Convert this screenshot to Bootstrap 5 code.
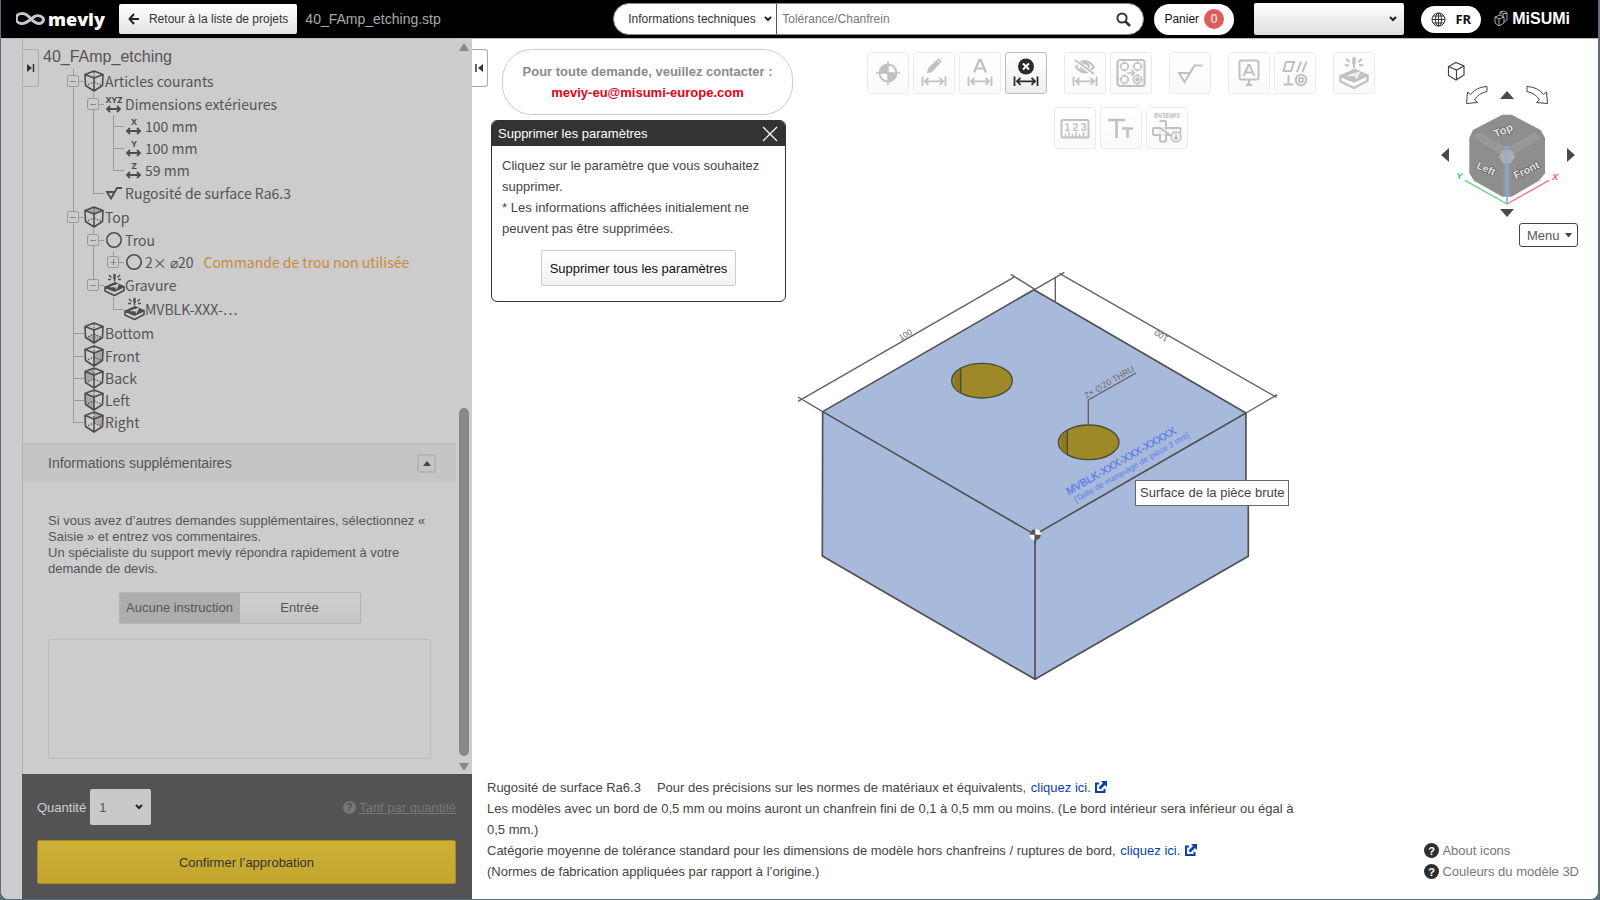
<!DOCTYPE html>
<html lang="fr">
<head>
<meta charset="utf-8">
<meta name="viewport" content="width=device-width, initial-scale=1">
<title>meviy – 40_FAmp_etching.stp</title>
<link rel="stylesheet" href="https://cdn.jsdelivr.net/npm/bootstrap@5.3.0/dist/css/bootstrap.min.css">
<style>
  :root { --ink: #333; --soft: #555; --panel: #ccc; --rule: #b4b4b4; }
  body { background: #5b7078; font: 13px/21px "Liberation Sans", Arial, sans-serif; color: #444; }
  button, select, input, textarea { font-family: inherit; }
  .app-frame { height: 100vh; padding: 0 2px 1px 1px; }
  .app-body { background: #fff; border-radius: 0 0 8px 8px; border-top: 1px solid #bbb; overflow: hidden; }
  svg { display: block; flex: none; }

  /* header */
  .top-bar { background: #000; height: 38px; padding-left: 15px; padding-right: 28px; font-size: 12px; }
  .brand-word { font: 800 18px/24px "Open Sans", sans-serif; color: #fff; margin-left: 2px; }
  .flat-grad { background: linear-gradient(#fff, #e3e3e3); color: var(--ink); border: 0; border-radius: 2px; }
  .back-link { height: 30px; padding: 0 9px; margin-left: 14px; font-size: 12px; text-decoration: none; gap: 10px; }
  .file-name { font-size: 14px; color: #aaa; }
  .search-pill { height: 32px; width: 531px; margin-right: 10px; background: #fff; border-radius: 16px; overflow: hidden; border: 1px solid #888; }
  .pick { appearance: none; border: 0; border-radius: 2px; font-size: 12px; color: var(--ink);
    background: url("data:image/svg+xml,%3Csvg xmlns='http://www.w3.org/2000/svg' width='8' height='6'%3E%3Cpath d='M1 1l3 3 3-3' fill='none' stroke='%23222' stroke-width='2'/%3E%3C/svg%3E") no-repeat right 4px center; }
  .kind { width: 163px; padding-left: 14px; border-right: 1px solid #555; border-radius: 0; }
  .query { border: 0; font-size: 12px; padding: 0 5px; background: none; }
  .query::placeholder { color: #777; opacity: 1; }
  .cart { width: 80px; height: 31px; margin-right: 20px; border: 0; background: #fff; color: #111; font-size: 12px; gap: 5px; }
  .cart-count { width: 20px; height: 20px; background: #e05c5c; color: #fff; line-height: 20px; }
  .account { width: 150px; height: 32px; margin-right: 17px; background-color: #eee; background-image: url("data:image/svg+xml,%3Csvg xmlns='http://www.w3.org/2000/svg' width='8' height='6'%3E%3Cpath d='M1 1l3 3 3-3' fill='none' stroke='%23222' stroke-width='2'/%3E%3C/svg%3E"), linear-gradient(#fff, #ddd); background-repeat: no-repeat; background-position: right 7px center, 0 0; }
  .lang { width: 60px; height: 27px; margin-right: 13px; border: 0; background: #fff; font: 700 13px/20px "Noto Sans", sans-serif; color: #111; gap: 9px; }
  .corp { font: 700 16px/24px "Liberation Sans", sans-serif; color: #fff; }

  /* side panel */
  .rail { width: 21px; background: var(--panel); }
  .side { width: 450px; background: var(--panel); color: var(--soft); border-left: 1px solid var(--rule); }
  .side-scroll { min-height: 0; position: relative; }
  .edge-tab { position: absolute; left: 0; top: 10px; width: 16px; height: 38px; padding: 0; border: 1px solid #aaa; border-left: 0; border-radius: 0 3px 3px 0; background: none; }
  .edge-main { background: #fff; }
  .tree-title { font-size: 16px; line-height: 24px; margin: 6px 0 0 20px; }
  .tree { font: 14px/22px "Noto Sans CJK SC", "Noto Sans CJK JP", sans-serif; margin-left: 44px; }
  .tree ul { padding-left: 20px; }
  .tree li { position: relative; list-style: none; }
  .tree li::before { content: ""; position: absolute; left: 6px; top: 0; bottom: 0; border-left: 1px solid #999; }
  .tree li:last-child::before { bottom: auto; height: 12px; }
  .node { display: flex; align-items: center; height: 22px; position: relative; }
  .node.tall { height: 24px; }
  .node::before { content: ""; position: absolute; left: 6px; width: 11px; border-top: 1px solid #999; }
  .node svg { margin-right: 1px; overflow: visible; }
  .fold { width: 12px; height: 12px; padding: 0; margin-right: 5px; border: 1px solid #999; border-radius: 2px; position: relative; z-index: 1;
    background: linear-gradient(#888, #888) center / 6px 1px no-repeat var(--panel); }
  .fold.closed { background: linear-gradient(#888, #888) center / 6px 1px no-repeat, linear-gradient(#888, #888) center / 1px 6px no-repeat var(--panel); }
  .leaf { width: 12px; margin-right: 5px; }
  .warn { color: #c98a3e; margin-left: 10px; }
  .extra-head { border-top: 2px solid #bbb; background: #c5c5c5; height: 39px; padding: 0 20px 0 25px; margin-top: 10px; }
  .extra-title { font-size: 14px; }
  .mini { width: 19px; height: 19px; padding: 0; border: 2px solid #b4b4b4; border-radius: 3px; background: none; }
  .extra-body { padding: 31px 25px 15px; line-height: 16px; }
  .choice { width: 242px; height: 32px; margin: 15px auto 15px; border: 1px solid var(--rule); border-radius: 2px; overflow: hidden; }
  .choice label { flex: 1; line-height: 30px; text-align: center; background: linear-gradient(#cfcfcf, #c6c6c6); }
  .choice input:checked + label { background: #adadad; }
  .note-box { height: 120px; width: 383px; border: 1px solid #bbb; border-radius: 3px; background: none; resize: none; }
  .track { width: 16px; padding: 5px 0 4px; background: #cdcdcd; }
  .thumb { width: 10px; height: 348px; border-radius: 5px; background: #888; margin: auto 0 7px; }
  .order { background: #535353; padding: 15px 16px 15px 15px; height: 125px; margin-left: -1px; }
  .qty-label { color: #d0d0d0; }
  .qty { width: 61px; height: 36px; padding-left: 9px; font-size: 13px; color: #555; background-color: #c9c9c9; background-position: right 8px center; }
  .tariff { color: #777; }
  .confirm { height: 44px; border: 1px solid #a58c28; border-radius: 2px; background: linear-gradient(#ccb035, #c4a62f); color: #333; font-size: 13px; }

  /* 3D view */
  .overlay { position: relative; }
  .left-col { width: 329px; padding-left: 19px; padding-top: 10px; }
  .contact { width: 291px; height: 66px; margin-left: 11px; border: 1px solid #ccc; border-radius: 30px; background: #fff; color: #8a8a8a; font-weight: 700; }
  .contact a { color: #e60012; text-decoration: none; }
  .tool-panel { width: 295px; margin-top: 5px; border: 1px solid var(--ink); border-radius: 6px; background: #fff; overflow: hidden; }
  .tool-head { background: var(--ink); color: #fff; height: 25px; padding: 0 7px 0 6px; }
  .tool-text { padding: 9px 10px 15px; }
  .plain { height: 36px; width: 195px; margin-top: 11px; border: 1px solid #ccc; border-radius: 2px; background: linear-gradient(#fff, #f2f2f2); color: #111; font-size: 13px; }
  .tools { padding-top: 13px; gap: 13px; }
  .tools-row { gap: 17px; }
  .tools-set { gap: 4px; }
  .tool { width: 42px; height: 42px; padding: 0; border: 1px solid #ebebeb; border-radius: 3px; background: linear-gradient(#fff, #fafafa); color: #c1c1c1; }
  .tool.active { border-color: #bbb; background: linear-gradient(#fff, #eee); color: #2b2b2b; }
  .nav-col { width: 157px; padding: 22px 20px 0 0; }
  .nav-line { margin-right: 3px; }
  .nav-mid { margin-right: 6px; gap: 12px; }
  .bare { border: 0; padding: 0; background: none; color: #4a4a4a; }
  .menu-btn { width: 59px; height: 24px; border: 1px solid #444; border-radius: 3px; background: #fff; color: #555; padding: 0 5px 0 7px; margin-top: 6px; font-size: 13px; }
  .notes { width: 824px; padding: 0 0 17px 15px; color: #444; }
  .notes a { color: #0a3fa8; text-decoration: none; margin-left: 1px; }
  .notes svg, .tariff svg { display: inline-block; vertical-align: -2px; }
  .help { padding: 0 19px 17px 0; }
  .help a { color: #777; text-decoration: none; gap: 3px; }
</style>
</head>
<body>
<svg width="0" height="0" class="position-absolute" aria-hidden="true">
  <defs>
    <g id="box" fill="none" stroke="#4d4d4d" stroke-linejoin="round">
      <path stroke-width="1.6" d="M10 1 19 4.500 18.500 15.500 10 21 1.500 15.500 1 4.500ZM1 4.500 10 8 19 4.500M10 8V21"/>
      <path stroke-width="1.200" stroke-dasharray="1.500 1.500" d="M10 2V12L2 15.500M10 12 18 15.500"/>
    </g>
    <g id="span"><path d="M3 6H16M6 3 3 6 6 9M13 3 16 6 13 9" fill="none" stroke="#4d4d4d" stroke-width="1.800"/></g>
    <g id="ring"><circle cx="10" cy="10" r="7.200" fill="none" stroke="#4d4d4d" stroke-width="1.600"/></g>
    <g id="engrave">
      <path d="M1 13 11 8.500 20 12.500 10.500 17Z" fill="currentColor" stroke="currentColor" stroke-linejoin="round"/>
      <path d="M1 13V17L10.500 21.500 20 16.500V12.500L10.500 17Z" fill="none" stroke="currentColor" stroke-width="1.600" stroke-linejoin="round"/>
      <path d="M6.500 13 14 10.800 12 15M9 12.300 12.300 13.200" fill="none" stroke="#fff" stroke-opacity=".8" stroke-width="1.200"/>
      <path d="M10.500 0V5" stroke="currentColor" stroke-width="2.400"/><path d="M10.500 5V7.500" stroke="currentColor" stroke-width="1.400"/>
      <path d="M5 1 7.500 3.500M4 5.500H7M16 1 13.500 3.500M17 5.500H14" stroke="currentColor" stroke-width="1.400"/>
    </g>
    <g id="dim" fill="none" stroke="currentColor" stroke-width="1.800"><path d="M8.500 23.500V33M31.500 23.500V33M11 28.300H29M14.500 24.800 11 28.300 14.500 31.800M25.500 24.800 29 28.300 25.500 31.800"/></g>
    <g id="ext"><path d="M5 2.500H2V11H10.500V8" fill="none" stroke="#0a3fa8" stroke-width="2"/><path d="M7 0H13V6L11 4 6.500 8.500 4.500 6.500 9 2Z" fill="#0a3fa8"/></g>
    <g id="ask"><circle cx="7.500" cy="7.500" r="7.500" fill="currentColor"/></g>
  </defs>
</svg>

<div class="app-frame d-flex flex-column">
  <header class="top-bar d-flex align-items-center flex-shrink-0">
    <svg width="30" height="16" viewBox="0 0 30 16"><path d="M15 8C11 3 8 2 5.500 2.500A5 5 0 0 0 5 12.500C9 13.500 14 9 17 6.500S24 4 26.500 6.500 26 13 22.500 12.500C19 12 17 10 15 8Z" fill="none" stroke="#c9c5cc" stroke-width="3"/></svg>
    <span class="brand-word">meviy</span>
    <a href="#" class="back-link flat-grad d-flex align-items-center"><svg width="11" height="12" viewBox="0 0 11 12"><path d="M11 6H2M6 1 1.500 6 6 11" fill="none" stroke="#222" stroke-width="2"/></svg>Retour à la liste de projets</a>
    <span class="file-name ms-2">40_FAmp_etching.stp</span>
    <form class="search-pill d-flex ms-auto">
      <select class="pick kind" aria-label="Catégorie"><option>Informations techniques</option></select>
      <input class="query flex-grow-1" type="text" placeholder="Tolérance/Chanfrein" aria-label="Recherche">
      <button type="button" class="bare me-2 pe-1" aria-label="Rechercher"><svg width="15" height="15" viewBox="0 0 15 15"><circle cx="6" cy="6" r="4.600" fill="none" stroke="#333" stroke-width="2"/><path d="M9.500 9.500 14 14" stroke="#333" stroke-width="2.600"/></svg></button>
    </form>
    <button type="button" class="cart rounded-pill d-flex align-items-center justify-content-center">Panier<span class="cart-count rounded-circle">0</span></button>
    <select class="pick account" aria-label="Compte"><option></option></select>
    <button type="button" class="lang rounded-pill d-flex align-items-center justify-content-center p-0"><svg width="15" height="15" viewBox="0 0 15 15" fill="none" stroke="#333"><circle cx="7.500" cy="7.500" r="6.500"/><ellipse cx="7.500" cy="7.500" rx="3" ry="6.500"/><path d="M7.500 1V14M1 7.500H14M2 4H13M2 11H13"/></svg>FR</button>
    <a href="#" class="corp text-decoration-none d-flex align-items-center gap-1"><svg width="14" height="18" viewBox="0 0 14 18" fill="none" stroke="#aaa"><path d="M1 7 5 9V16L1 13ZM5 9 10 7V13L5 16M1 7 6 5 6 2 10 1 13 3V10L10 12M6 2 9 4 13 3M9 4V7M6 5 10 7"/></svg>MiSUMi</a>
  </header>

  <div class="app-body d-flex flex-grow-1 overflow-hidden">
    <div class="rail flex-shrink-0"></div>
    <aside class="side d-flex flex-column flex-shrink-0">
      <div class="side-scroll d-flex flex-grow-1">
        <div class="flex-grow-1">
          <button type="button" class="edge-tab" aria-label="Déplier"><svg width="14" height="12" viewBox="0 0 14 12"><path d="M4 2 9 6 4 10Z" fill="#333"/><path d="M10.500 2V10" stroke="#333" stroke-width="1.500"/></svg></button>
          <div class="tree-title">40_FAmp_etching</div>
          <ul class="tree p-0 mb-0" id="tree"></ul>
          <div class="extra-head d-flex align-items-center justify-content-between">
            <span class="extra-title">Informations supplémentaires</span>
            <button type="button" class="mini" aria-label="Replier"><svg class="mx-auto" width="8" height="5" viewBox="0 0 8 5"><path d="M0 5 4 0 8 5Z" fill="#444"/></svg></button>
          </div>
          <div class="extra-body">
            Si vous avez d’autres demandes supplémentaires, sélectionnez «<br>Saisie » et entrez vos commentaires.<br>Un spécialiste du support meviy répondra rapidement à votre<br>demande de devis.
            <div class="choice d-flex">
              <input class="visually-hidden" type="radio" name="instr" id="i0" checked><label for="i0">Aucune instruction</label>
              <input class="visually-hidden" type="radio" name="instr" id="i1"><label for="i1">Entrée</label>
            </div>
            <textarea class="note-box d-block" aria-label="Commentaires"></textarea>
          </div>
        </div>
        <div class="track d-flex flex-column align-items-center">
          <svg width="10" height="7" viewBox="0 0 10 7"><path d="M0 7 3.500 1Q5-1 6.500 1L10 7Z" fill="#888"/></svg>
          <div class="thumb"></div>
          <svg width="10" height="7" viewBox="0 0 10 7"><path d="M0 0H10L6.500 6Q5 8 3.500 6Z" fill="#888"/></svg>
        </div>
      </div>
      <div class="order flex-shrink-0 d-flex flex-column justify-content-between">
        <div class="d-flex align-items-center">
          <label for="qty" class="qty-label me-1">Quantité</label>
          <select id="qty" class="pick qty"><option>1</option></select>
          <span class="tariff ms-auto"><svg width="13" height="13" viewBox="0 0 15 15"><use href="#ask"/><text x="7.500" y="12" text-anchor="middle" font-size="12" font-weight="700" fill="#535353">?</text></svg> <a href="#" class="tariff">Tarif par quantité</a></span>
        </div>
        <button type="button" class="confirm w-100">Confirmer l’approbation</button>
      </div>
    </aside>

    <main class="flex-grow-1 position-relative bg-white">
      <svg class="position-absolute w-100 h-100" viewBox="0 0 1126 860" role="img" aria-label="Modèle 3D">
        <g transform="translate(308 221) scale(.3333)" stroke-linejoin="round" font-family="Liberation Sans, sans-serif">
          <path d="M762 89 1398 459V664H1405V889L765 1258 127 888 128 455Z" fill="#a8badc" stroke="#505050" stroke-width="5"/>
          <path d="M128 455 765 824 1398 459M765 824V1258" fill="none" stroke="#505050" stroke-width="5"/>
          <path d="M54 411 128 455M54 424 705 50M692 43 765 88 853 37M838 40 1490 412M1398 459 1492 404M826 50V128M925 492V420L1068 339" fill="none" stroke="#606060" stroke-width="4"/>
          <g stroke="#4a4a3a" stroke-width="4"><ellipse cx="606" cy="362" rx="91" ry="52" fill="#9d8928"/><ellipse cx="926" cy="547" rx="91" ry="52" fill="#9d8928"/><path d="M524 340 542 328V398L524 385ZM844 525 862 512V584L844 570Z" fill="#8b7a22" stroke="none"/><path d="M542 326V399M862 511V584"/></g>
          <g fill="#6a6a6a"><text transform="translate(362 242) rotate(-30)" font-size="25">100</text><text transform="translate(1166 230) rotate(210)" font-size="25">100</text><text transform="translate(919 416) rotate(-30)" font-size="26">2× ∅20 THRU</text></g>
          <g fill="#5c7ee6"><text transform="translate(866 706) rotate(-30)" font-size="32" stroke="#5c7ee6">MVBLK-XXX-XXX-XXXXX</text><text transform="translate(888 728) rotate(-30)" font-size="25">[Taille de marquage de pièce 3 mm]</text></g>
          <circle cx="766" cy="824" r="17" fill="#fff"/><path d="M766 824V807A17 17 0 0 1 783 824ZM766 824V841A17 17 0 0 1 749 824Z" fill="#555" transform="rotate(90 766 824)"/><path d="M766 824V850" stroke="#505050" stroke-width="5"/>
        </g>
        <rect x="663.500" y="441.500" width="153" height="25" fill="#fff" stroke="#666"/>
        <text x="668" y="458" font-size="13" fill="#444">Surface de la pièce brute</text>
      </svg>

      <div class="overlay d-flex flex-column justify-content-between h-100">
        <div class="d-flex align-items-start">
          <button type="button" class="edge-tab edge-main" aria-label="Replier le panneau"><svg width="14" height="12" viewBox="0 0 14 12"><path d="M11 2 6 6 11 10Z" fill="#333"/><path d="M4 2V10" stroke="#333" stroke-width="1.500"/></svg></button>
          <div class="left-col flex-shrink-0">
            <div class="contact d-flex flex-column align-items-center justify-content-center">Pour toute demande, veuillez contacter :<a href="mailto:meviy-eu@misumi-europe.com">meviy-eu@misumi-europe.com</a></div>
            <section class="tool-panel">
              <div class="tool-head d-flex align-items-center justify-content-between">Supprimer les paramètres<button type="button" class="bare" aria-label="Fermer"><svg width="16" height="16" viewBox="0 0 16 16"><path d="M1 1 15 15M15 1 1 15" stroke="#fff" stroke-width="1.300"/></svg></button></div>
              <div class="tool-text">Cliquez sur le paramètre que vous souhaitez supprimer.<br>* Les informations affichées initialement ne peuvent pas être supprimées.
                <button type="button" class="plain d-block mx-auto p-0">Supprimer tous les paramètres</button></div>
            </section>
          </div>

          <div class="tools flex-grow-1 d-flex flex-column align-items-center">
            <div class="tools-row d-flex">
              <div class="tools-set d-flex">
                <button type="button" class="tool" aria-label="Origine"><svg width="40" height="40" viewBox="0 0 40 40"><circle cx="20" cy="20" r="8.500" fill="none" stroke="currentColor" stroke-width="1.800"/><path d="M20 20V11.500A8.500 8.500 0 0 0 11.500 20ZM20 20V28.500A8.500 8.500 0 0 0 28.500 20Z" fill="currentColor"/><path d="M20 8V32M8 20H32" stroke="currentColor" stroke-width="1.500"/></svg></button>
                <button type="button" class="tool" aria-label="Modifier"><svg width="40" height="40" viewBox="0 0 40 40"><path d="M13.500 20 14.500 15.500 22.500 7.500 25.500 10.500 18 18.500ZM23.500 6.500 25 6 27 8 26.500 9.500Z" fill="currentColor" stroke="currentColor"/><use href="#dim"/></svg></button>
                <button type="button" class="tool" aria-label="Texte de cote"><svg width="40" height="40" viewBox="0 0 40 40"><path d="M14 19.500 19.300 7H20.700L26 19.500M16 15.500H24" fill="none" stroke="currentColor" stroke-width="2.200"/><use href="#dim"/></svg></button>
                <button type="button" class="tool active" aria-label="Supprimer"><svg width="40" height="40" viewBox="0 0 40 40"><circle cx="20" cy="13.500" r="8" fill="currentColor"/><path d="M17 10.500 23 16.500M23 10.500 17 16.500" stroke="#fff" stroke-width="2"/><use href="#dim"/></svg></button>
              </div>
              <div class="tools-set d-flex">
                <button type="button" class="tool" aria-label="Masquer"><svg width="40" height="40" viewBox="0 0 40 40"><path d="M11 14Q20 2 29 14 20 25 11 14Z" fill="none" stroke="currentColor" stroke-width="2"/><circle cx="20" cy="14" r="3.800" fill="none" stroke="currentColor" stroke-width="2.500"/><path d="M10.500 8 28.500 21" stroke="#fff" stroke-width="4"/><path d="M10 7 29 21" stroke="currentColor" stroke-width="1.800"/><use href="#dim"/></svg></button>
                <button type="button" class="tool" aria-label="Grouper les trous"><svg width="40" height="40" viewBox="0 0 40 40" fill="none" stroke="currentColor" stroke-width="1.600"><rect x="6.500" y="7" width="27" height="26" rx="2.500" stroke-width="2.200"/><circle cx="13.500" cy="13.500" r="3.700"/><circle cx="26.500" cy="13.500" r="3.700"/><circle cx="13.500" cy="26.500" r="3.700"/><circle cx="26.500" cy="26.500" r="4"/><circle cx="26.500" cy="26.500" r="1.500" fill="currentColor"/><path d="M13.500 8.500V10.500M13.500 16.500V18.500M26.500 8.500V10.500M26.500 16.500V18.500M13.500 21.500V23.500M13.500 29.500V31.500M26.500 21V23M26.500 30V32M8.500 13.500H10.500M16.500 13.500H18.500M21.500 13.500H23.500M29.500 13.500H31.500M8.500 26.500H10.500M29.500 26.500H31.500M16 20H23M20.500 17 23.500 20 20.500 23"/></svg></button>
              </div>
              <div class="tools-set d-flex"><button type="button" class="tool" aria-label="Rugosité"><svg width="40" height="40" viewBox="0 0 40 40"><path d="M20 20H9L14.500 29 24.500 12.500H32.500" fill="none" stroke="currentColor" stroke-width="2"/></svg></button></div>
              <div class="tools-set d-flex">
                <button type="button" class="tool" aria-label="Référence"><svg width="40" height="40" viewBox="0 0 40 40" fill="none" stroke="currentColor" stroke-width="2"><rect x="10.500" y="7.500" width="19" height="19" rx="2"/><path d="M14.500 23 19.500 12H20.500L25.500 23M16.500 19.500H23.500M20 27V30"/><path d="M16 33 20 28.500 24 33Z" fill="currentColor" stroke="none"/></svg></button>
                <button type="button" class="tool" aria-label="Tolérances géométriques"><svg width="40" height="40" viewBox="0 0 40 40" fill="none" stroke="currentColor" stroke-width="2"><path d="M11 9H19L16 18H8.500ZM22 19 26 8.500M27.500 19 31.500 8.500M13.500 22V31.500M8.500 31.500H18.500"/><circle cx="26" cy="27" r="5.300"/><circle cx="26" cy="27" r="2.200"/></svg></button>
              </div>
              <div class="tools-set d-flex"><button type="button" class="tool" aria-label="Gravure"><svg width="40" height="40" viewBox="-3.500 -2 28 28"><use href="#engrave" transform="translate(0 1)"/></svg></button></div>
            </div>
            <div class="tools-set d-flex">
              <button type="button" class="tool" aria-label="Mesure"><svg width="40" height="40" viewBox="0 0 40 40"><rect x="6.500" y="12" width="27" height="17.500" rx="1.500" fill="none" stroke="currentColor" stroke-width="2"/><path d="M10.500 29V26M14 29V24M17.500 29V26M21 29V24M24.500 29V26M28.500 29V24" stroke="currentColor" stroke-width="1.400"/><text x="20.500" y="23" text-anchor="middle" font-size="10" font-weight="700" fill="currentColor">1 2 3</text></svg></button>
              <button type="button" class="tool" aria-label="Taille du texte"><svg width="40" height="40" viewBox="0 0 40 40"><path d="M7 12H24M15.500 12V30" stroke="currentColor" stroke-width="2.600"/><path d="M21 20.500H32M26.500 20.500V30" stroke="currentColor" stroke-width="2.600"/></svg></button>
              <button type="button" class="tool" aria-label="6 vues"><svg width="40" height="40" viewBox="0 0 40 40"><text x="20" y="10" text-anchor="middle" font-size="7" font-weight="700" font-family="Noto Sans, sans-serif" fill="currentColor">6VIEWS</text><path d="M13 14Q13 13 14 13H18Q19 13 19 14V20H32.500Q33.500 20 33.500 21V25M23 27H19V32.500Q19 33.500 18 33.500H14Q13 33.500 13 32.500V27H7Q6 27 6 26V21Q6 20 7 20H13Z" fill="none" stroke="currentColor" stroke-width="2"/><path d="M13 20H19V27H13ZM26 20V24" fill="none" stroke="currentColor" stroke-opacity=".6"/><circle cx="29" cy="29" r="4.800" fill="#fff" stroke="currentColor" stroke-width="1.800"/><path d="M29 26V31M26.800 29 29 31.500 31.200 29" fill="none" stroke="currentColor" stroke-width="1.800"/></svg></button>
            </div>
          </div>

          <div class="nav-col flex-shrink-0 d-flex flex-column">
            <button type="button" class="bare ms-1 me-auto" aria-label="Vue isométrique"><svg width="20" height="20" viewBox="0 0 20 20"><path d="M11 1.500 19 5V14L11 19 3.500 14.500V5.500ZM3.500 5.500 11.500 9 19 5M11.500 9V19" fill="none" stroke="#444" stroke-width="1.200"/></svg></button>
            <div class="nav-mid d-flex justify-content-center align-items-center mt-1">
              <button type="button" class="bare" aria-label="Pivoter à gauche"><svg width="23" height="19" viewBox="0 0 23 19"><path d="M22 1.500V6.500Q13 8.500 9.500 15L12.500 17.500 1.500 18.500 2.500 7 5.500 9.500Q11 2 22 1.500Z" fill="#fff" stroke="#444"/></svg></button>
              <button type="button" class="bare" aria-label="Haut"><svg width="14" height="8" viewBox="0 0 14 8"><path d="M0 8 7 0 14 8Z" fill="currentColor"/></svg></button>
              <button type="button" class="bare" aria-label="Pivoter à droite"><svg width="23" height="19" viewBox="0 0 23 19"><path d="M1 1.500V6.500Q10 8.500 13.500 15L10.500 17.500 21.500 18.500 20.500 7 17.500 9.500Q12 2 1 1.500Z" fill="#fff" stroke="#444"/></svg></button>
            </div>
            <div class="nav-line d-flex justify-content-between align-items-center">
              <button type="button" class="bare" aria-label="Gauche"><svg width="8" height="14" viewBox="0 0 8 14"><path d="M8 0 0 7 8 14Z" fill="currentColor"/></svg></button>
              <svg width="104" height="101" viewBox="171 162 312 303" font-family="Liberation Sans, sans-serif">
                <path d="M310 194H338L425 240 438 263V370L420 392 338 440H310L225 392 211 370V263L222 240Z" fill="#8e8e8e"/>
                <path d="M240 247 324 293 408 247 425 265 345 312H303L222 263Z" fill="#989898"/>
                <path d="M313 335H335V438H313Z" fill="#979797"/>
                <path d="M312 300H336L349 320 336 340H312L299 320Z" fill="#adadad"/>
                <g fill="#e4e4e4" stroke="#5c5c5c" stroke-width="4" paint-order="stroke" font-weight="700"><text transform="translate(290 264) rotate(-24)" font-size="34">Top</text><text transform="translate(231 354) rotate(24)" font-size="31">Left</text><text transform="translate(350 388) rotate(-26)" font-size="32">Front</text></g>
                <path d="M324 462 198 391" stroke="#5fd67c" stroke-width="4"/><path d="M324 462 450 391" stroke="#f87474" stroke-width="4"/><path d="M324 462V318" stroke="#74b2f4" stroke-width="5"/>
                <g font-size="28" font-weight="700" font-style="italic"><text x="172" y="388" fill="#3ccc62">Y</text><text x="459" y="390" fill="#f45c5c">X</text><text x="316" y="307" fill="#74b2f4">Z</text></g>
              </svg>
              <button type="button" class="bare" aria-label="Droite"><svg width="8" height="14" viewBox="0 0 8 14"><path d="M0 0 8 7 0 14Z" fill="currentColor"/></svg></button>
            </div>
            <button type="button" class="bare nav-mid pt-1 d-flex justify-content-center" aria-label="Bas"><svg width="14" height="8" viewBox="0 0 14 8"><path d="M0 0H14L7 8Z" fill="currentColor"/></svg></button>
            <button type="button" class="menu-btn ms-auto d-flex align-items-center justify-content-between">Menu<svg width="7" height="5" viewBox="0 0 7 5"><path d="M0 0H7L3.500 4.500Z" fill="#444"/></svg></button>
          </div>
        </div>

        <div class="d-flex align-items-end justify-content-between">
          <div class="notes">
            Rugosité de surface Ra6.3<span class="ms-3">Pour des précisions sur les normes de matériaux et équivalents,</span> <a href="#">cliquez ici. <svg width="14" height="13" viewBox="0 0 14 13"><use href="#ext"/></svg></a><br>
            Les modèles avec un bord de 0,5 mm ou moins auront un chanfrein fini de 0,1 à 0,5 mm ou moins. (Le bord intérieur sera inférieur ou égal à 0,5 mm.)<br>
            Catégorie moyenne de tolérance standard pour les dimensions de modèle hors chanfreins / ruptures de bord, <a href="#">cliquez ici. <svg width="14" height="13" viewBox="0 0 14 13"><use href="#ext"/></svg></a><br>
            (Normes de fabrication appliquées par rapport à l’origine.)
          </div>
          <div class="help">
            <a href="#" class="d-flex align-items-center"><svg width="15" height="15" viewBox="0 0 15 15" color="#2e2e2e"><use href="#ask"/><text x="7.500" y="11.500" text-anchor="middle" font-size="11" font-weight="700" fill="#fff">?</text></svg>About icons</a>
            <a href="#" class="d-flex align-items-center"><svg width="15" height="15" viewBox="0 0 15 15" color="#2e2e2e"><use href="#ask"/><text x="7.500" y="11.500" text-anchor="middle" font-size="11" font-weight="700" fill="#fff">?</text></svg>Couleurs du modèle 3D</a>
          </div>
        </div>
      </div>
    </main>
  </div>
</div>

<script src="https://cdn.jsdelivr.net/npm/bootstrap@5.3.0/dist/js/bootstrap.bundle.min.js"></script>
<script>
  // Icons of the feature tree, each in a 20px wide slot
  const icon = (w, h, inner) => `<svg width="${w}" height="${h}" viewBox="0 0 ${w} ${h}" color="#4d4d4d">${inner}</svg>`;
  const cube = face => icon(20, 22, (face ? `<path d="${face}" fill="#a8a8a8"/>` : '') + '<use href="#box"/>');
  const span = axis => icon(20, 22, `<text x="10" y="10" text-anchor="middle" font-size="9" font-weight="700" font-family="Noto Sans, sans-serif" fill="#4d4d4d">${axis}</text><use href="#span" y="10"/>`);
  const ring = icon(20, 20, '<use href="#ring"/>');
  const engrave = icon(20, 22, '<use href="#engrave"/>');
  const rough = icon(20, 16, '<path d="M11 7H3L7 13.500 13 3H18" fill="none" stroke="#4d4d4d" stroke-width="1.800"/>');

  const data = [
    { t: 'Articles courants', i: cube(), tall: 1, open: 1, c: [
      { t: 'Dimensions extérieures', i: span('XYZ'), open: 1, c: [
        { t: '100 mm', i: span('X') }, { t: '100 mm', i: span('Y') }, { t: '59 mm', i: span('Z') } ] },
      { t: 'Rugosité de surface Ra6.3', i: rough, tall: 1 } ] },
    { t: 'Top', i: cube('M10 1 19 4.500 10 8 1 4.500Z'), tall: 1, open: 1, c: [
      { t: 'Trou', i: ring, open: 1, c: [
        { t: '2× ⌀20', i: ring, open: 0, warn: 'Commande de trou non utilisée' } ] },
      { t: 'Gravure', i: engrave, tall: 1, open: 1, c: [ { t: 'MVBLK-XXX-…', i: engrave, tall: 1 } ] } ] },
    { t: 'Bottom', i: cube('M10 12 18.500 15.500 10 21 1.500 15.500Z'), tall: 1 },
    { t: 'Front', i: cube('M10 8 19 4.500 18.500 15.500 10 21Z') },
    { t: 'Back', i: cube('M10 1 10 12 1.500 15.500 1 4.500Z') },
    { t: 'Left', i: cube('M10 8 1 4.500 1.500 15.500 10 21Z') },
    { t: 'Right', i: cube('M10 1 10 12 18.500 15.500 19 4.500Z') }
  ];
  const render = n => `<li><div class="node ${n.tall ? 'tall' : ''}">` +
    (n.open === undefined ? '<span class="leaf"></span>' : `<button type="button" class="fold ${n.open ? '' : 'closed'}" aria-label="${n.t}"></button>`) +
    `${n.i}<span>${n.t}</span>${n.warn ? `<span class="warn">${n.warn}</span>` : ''}</div>` +
    (n.c ? `<ul>${n.c.map(render).join('')}</ul>` : '') + '</li>';
  document.getElementById('tree').innerHTML = data.map(render).join('');
</script>
</body>
</html>
